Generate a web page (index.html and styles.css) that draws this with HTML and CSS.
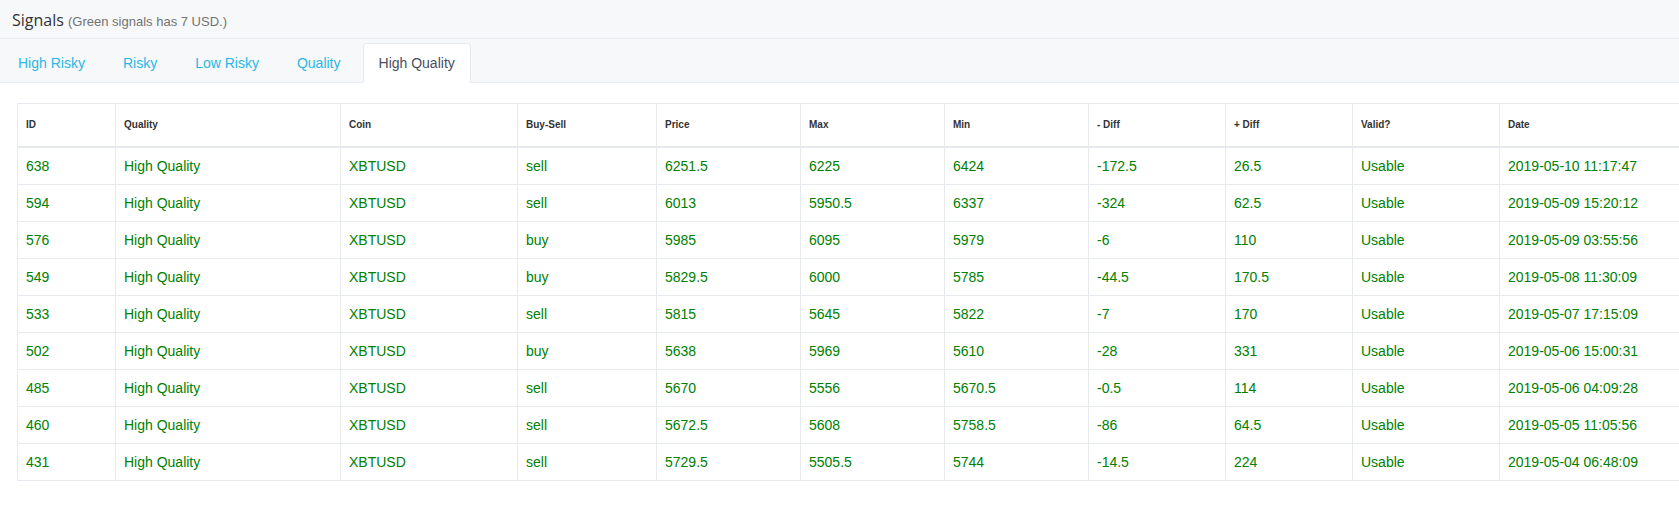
FILE: index.html
```html
<!DOCTYPE html>
<html lang="en">
<head>
<meta charset="utf-8">
<title>Signals</title>
<link rel="stylesheet" href="styles.css">
</head>
<body>
<div class="panel">
  <div class="panel-head">
    <h2 class="title">Signals <small class="subtitle">(Green signals has 7 USD.)</small></h2>
  </div>
  <ul class="tabs">
    <li class="tab"><a href="#">High Risky</a></li>
    <li class="tab"><a href="#">Risky</a></li>
    <li class="tab"><a href="#">Low Risky</a></li>
    <li class="tab"><a href="#">Quality</a></li>
    <li class="tab active"><a href="#">High Quality</a></li>
  </ul>
  <div class="panel-body">
    <div class="table-wrap">
      <table class="signals">
        <thead>
          <tr>
            <th class="w-id">ID</th>
            <th class="w-quality">Quality</th>
            <th class="w-coin">Coin</th>
            <th class="w-side">Buy-Sell</th>
            <th class="w-num">Price</th>
            <th class="w-num">Max</th>
            <th class="w-num">Min</th>
            <th class="w-mdiff">- Diff</th>
            <th class="w-pdiff">+ Diff</th>
            <th class="w-valid">Valid?</th>
            <th class="w-date">Date</th>
          </tr>
        </thead>
        <tbody>
          <tr><td>638</td><td>High Quality</td><td>XBTUSD</td><td>sell</td><td>6251.5</td><td>6225</td><td>6424</td><td>-172.5</td><td>26.5</td><td>Usable</td><td>2019-05-10 11:17:47</td></tr>
          <tr><td>594</td><td>High Quality</td><td>XBTUSD</td><td>sell</td><td>6013</td><td>5950.5</td><td>6337</td><td>-324</td><td>62.5</td><td>Usable</td><td>2019-05-09 15:20:12</td></tr>
          <tr><td>576</td><td>High Quality</td><td>XBTUSD</td><td>buy</td><td>5985</td><td>6095</td><td>5979</td><td>-6</td><td>110</td><td>Usable</td><td>2019-05-09 03:55:56</td></tr>
          <tr><td>549</td><td>High Quality</td><td>XBTUSD</td><td>buy</td><td>5829.5</td><td>6000</td><td>5785</td><td>-44.5</td><td>170.5</td><td>Usable</td><td>2019-05-08 11:30:09</td></tr>
          <tr><td>533</td><td>High Quality</td><td>XBTUSD</td><td>sell</td><td>5815</td><td>5645</td><td>5822</td><td>-7</td><td>170</td><td>Usable</td><td>2019-05-07 17:15:09</td></tr>
          <tr><td>502</td><td>High Quality</td><td>XBTUSD</td><td>buy</td><td>5638</td><td>5969</td><td>5610</td><td>-28</td><td>331</td><td>Usable</td><td>2019-05-06 15:00:31</td></tr>
          <tr><td>485</td><td>High Quality</td><td>XBTUSD</td><td>sell</td><td>5670</td><td>5556</td><td>5670.5</td><td>-0.5</td><td>114</td><td>Usable</td><td>2019-05-06 04:09:28</td></tr>
          <tr><td>460</td><td>High Quality</td><td>XBTUSD</td><td>sell</td><td>5672.5</td><td>5608</td><td>5758.5</td><td>-86</td><td>64.5</td><td>Usable</td><td>2019-05-05 11:05:56</td></tr>
          <tr><td>431</td><td>High Quality</td><td>XBTUSD</td><td>sell</td><td>5729.5</td><td>5505.5</td><td>5744</td><td>-14.5</td><td>224</td><td>Usable</td><td>2019-05-04 06:48:09</td></tr>
        </tbody>
      </table>
    </div>
  </div>
</div>
</body>
</html>
```

FILE: styles.css
```css
* { box-sizing: border-box; }

html, body {
  margin: 0;
  padding: 0;
  background: #ffffff;
  overflow: hidden;
}

body {
  font-family: "Liberation Sans", Arial, sans-serif;
  font-size: 14px;
  line-height: 20px;
  color: #333333;
}

.panel {
  width: 100%;
}

.panel-head {
  height: 39px;
  background: #f7f8fa;
  border-bottom: 1px solid #e6e9ed;
  padding: 10px 0 0 12px;
}

.title {
  margin: 0;
  font-family: "Open Sans", "Liberation Sans", sans-serif;
  font-size: 16px;
  font-weight: 400;
  line-height: 21px;
  color: #333333;
  white-space: nowrap;
}

.subtitle {
  font-family: "Liberation Sans", Arial, sans-serif;
  font-size: 13px;
  color: #737373;
}

.tabs {
  list-style: none;
  margin: 0;
  padding: 4px 0 0 2px;
  display: flex;
  gap: 6px;
  background: #f7f8fa;
  border-bottom: 1px solid #e6e9ed;
}

.tab {
  margin-bottom: -1px;
}

.tab a {
  display: block;
  padding: 9px 15px;
  line-height: 20px;
  font-size: 14px;
  color: #2ab7e6;
  text-decoration: none;
  border: 1px solid transparent;
  border-radius: 4px 4px 0 0;
}

.tab.active a {
  color: #47505e;
  background: #ffffff;
  border-color: #e6e9ed;
  border-bottom-color: #ffffff;
}

.panel-body {
  padding: 20px 0 0 17px;
}

.table-wrap {
  overflow: hidden;
}

.signals {
  table-layout: fixed;
  width: 1703px;
  border-collapse: separate;
  border-spacing: 0;
  border-top: 1px solid #e6e9ed;
  border-left: 1px solid #e6e9ed;
}

.signals th,
.signals td {
  text-align: left;
  border-right: 1px solid #e6e9ed;
  border-bottom: 1px solid #e6e9ed;
  white-space: nowrap;
  overflow: hidden;
}

.signals th {
  padding: 14px 8px;
  font-size: 10px;
  line-height: 14px;
  font-weight: 700;
  color: #333333;
  border-bottom-width: 2px;
}

.signals td {
  padding: 8px;
  font-size: 14px;
  line-height: 20px;
  color: #008000;
}

.w-id { width: 98px; }
.w-quality { width: 225px; }
.w-coin { width: 177px; }
.w-side { width: 139px; }
.w-num { width: 144px; }
.w-mdiff { width: 137px; }
.w-pdiff { width: 127px; }
.w-valid { width: 147px; }
.w-date { width: 220px; }
```
